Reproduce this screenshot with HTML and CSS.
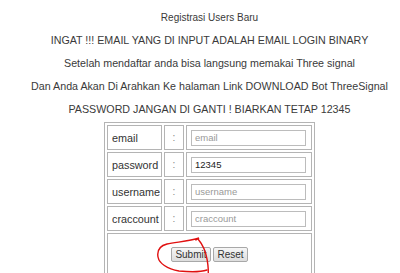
FILE: index.html
```html
<!DOCTYPE html>
<html>
<head>
<meta charset="utf-8">
<link rel="stylesheet" href="styles.css">
</head>
<body>
<div class="page">
  <div class="line title">Registrasi Users Baru</div>
  <div class="line">INGAT !!! EMAIL YANG DI INPUT ADALAH EMAIL LOGIN BINARY</div>
  <div class="line">Setelah mendaftar anda bisa langsung memakai Three signal</div>
  <div class="line">Dan Anda Akan Di Arahkan Ke halaman Link DOWNLOAD Bot ThreeSignal</div>
  <div class="line">PASSWORD JANGAN DI GANTI ! BIARKAN TETAP 12345</div>
  <form class="form-wrap">
    <table class="reg">
      <colgroup>
        <col class="c-lbl">
        <col class="c-sep">
        <col class="c-fld">
      </colgroup>
      <tr>
        <td class="lbl">email</td>
        <td class="sep">:</td>
        <td class="fld"><input class="inp" type="text" placeholder="email"></td>
      </tr>
      <tr>
        <td class="lbl">password</td>
        <td class="sep">:</td>
        <td class="fld"><input class="inp" type="text" value="12345"></td>
      </tr>
      <tr>
        <td class="lbl">username</td>
        <td class="sep">:</td>
        <td class="fld"><input class="inp" type="text" placeholder="username"></td>
      </tr>
      <tr>
        <td class="lbl">craccount</td>
        <td class="sep">:</td>
        <td class="fld"><input class="inp" type="text" placeholder="craccount"></td>
      </tr>
      <tr>
        <td class="actions" colspan="3">
          <span class="btn-wrap">
            <button type="button" class="btn">Submit</button>
            <svg class="scribble" width="60" height="45" viewBox="0 0 60 45">
              <path d="M41 5 L44 3 C 35 6, 22 7, 12 9 C 4 11, 2 16, 3 22 C 4 28, 12 34, 24 36 C 34 37, 46 37, 52 35" fill="none" stroke="#e01010" stroke-width="1.4" stroke-linecap="round"/>
              <path d="M43 4 C 48 10, 51 18, 52 24 C 53 30, 54 35, 53 42" fill="none" stroke="#e01010" stroke-width="1.4" stroke-linecap="round"/>
            </svg>
          </span>
          <button type="button" class="btn">Reset</button>
        </td>
      </tr>
    </table>
  </form>
</div>
</body>
</html>
```
FILE: styles.css
```css
html, body {
  margin: 0;
  padding: 0;
  background: #ffffff;
  overflow: hidden;
}
.page {
  width: 399px;
  padding-left: 10px;
  padding-top: 6px;
  text-align: center;
  font-family: "Liberation Sans", Arial, sans-serif;
  font-size: 10.7px;
  color: #3a3a3a;
}
.line {
  height: 23px;
  line-height: 23px;
  white-space: nowrap;
}
.title {
  font-size: 10px;
}
.form-wrap {
  margin: 1px 0 0 0;
  display: flex;
  justify-content: center;
}
.reg {
  border: 1px solid #b4b4b4;
  border-spacing: 2px;
  table-layout: fixed;
  width: 211px;
}
.c-lbl { width: 55px; }
.c-sep { width: 20px; }
.c-fld { width: 126px; }
.reg td {
  border: 1px solid #b4b4b4;
  height: 25px;
  padding: 0;
  box-sizing: border-box;
}
.reg td.lbl {
  text-align: left;
  padding-left: 4px;
  font-size: 10.8px;
  color: #333;
  white-space: nowrap;
}
.reg td.sep {
  text-align: center;
  color: #888;
  font-size: 10px;
}
.reg td.fld {
  text-align: left;
  padding-left: 4px;
}
.inp {
  display: block;
  box-sizing: border-box;
  width: 115px;
  height: 16px;
  margin: 0;
  padding: 0 3px;
  border: 1px solid #bcbcbc;
  font-family: "Liberation Sans", Arial, sans-serif;
  font-size: 9.5px;
  color: #222;
  background: #fff;
  outline: none;
}
.inp::placeholder {
  color: #999;
}
.reg td.actions {
  height: 45px;
  padding-top: 13px;
  vertical-align: top;
  text-align: center;
}
.btn-wrap {
  position: relative;
  display: inline-block;
}
.btn {
  font-family: "Liberation Sans", Arial, sans-serif;
  font-size: 10px;
  color: #333;
  height: 15px;
  padding: 0 3px;
  margin: 0;
  border: 1px solid #a8a8a8;
  border-radius: 2px;
  background: linear-gradient(#f6f6f6, #dddddd);
  line-height: 13px;
}
.scribble {
  position: absolute;
  left: -16px;
  top: -12px;
  pointer-events: none;
  overflow: visible;
}
```
